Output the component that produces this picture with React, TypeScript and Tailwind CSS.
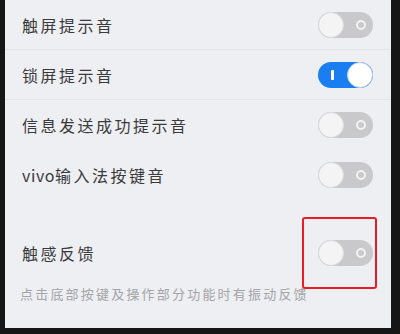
import React from "react";

function Toggle({ on }: { on: boolean }) {
  if (on) {
    return (
      <div className="relative w-[55px] h-[26px] rounded-full bg-[#1a7ef0] flex items-center justify-end shrink-0">
        <div className="absolute left-[13px] top-[8px] w-[2.5px] h-[10px] bg-white rounded-[1px]" />
        <div className="w-[26px] h-[26px] rounded-full bg-white border border-[#c3cfe3]" />
      </div>
    );
  }
  return (
    <div className="relative w-[55px] h-[26px] rounded-full bg-[#c9c9cc] flex items-center shrink-0">
      <div className="w-[26px] h-[26px] rounded-full bg-[#f4f4f5] border border-[#dcdcde]" />
      <div className="absolute right-[7px] top-[8px] w-[10px] h-[10px] rounded-full border-[2px] border-[#f2f2f3]" />
    </div>
  );
}

function Row({ label, on, border = true }: { label: React.ReactNode; on: boolean; border?: boolean }) {
  return (
    <div
      className={`h-[50px] flex items-center justify-between pl-[17px] pr-[18px] ${
        border ? "border-b border-[#e4e5e8]" : ""
      }`}
    >
      <span className="text-[16px] tracking-[2.5px] text-[#3a3a3c] leading-none">{label}</span>
      <Toggle on={on} />
    </div>
  );
}

export default function App() {
  return (
    <div
      className="w-[400px] h-[334px] bg-[#161616] pl-[5px] pr-[9px] pb-[6px] overflow-hidden"
      style={{ fontFamily: '"Noto Sans CJK SC", "Noto Sans", sans-serif' }}
    >
      <div className="relative w-full h-full bg-[#eeeff2] flex flex-col">
        <Row label="触屏提示音" on={false} />
        <Row label="锁屏提示音" on={true} />
        <Row label="信息发送成功提示音" on={false} border={false} />
        <Row
          label={
            <>
              <span className="tracking-[0.6px]">vivo</span>输入法按键音
            </>
          }
          on={false}
          border={false}
        />
        <div className="h-[28px]" />
        <Row label="触感反馈" on={false} border={false} />
        <div className="pl-[15px] mt-[8px] text-[13px] tracking-[2.2px] leading-[15px] text-[#a4a4a8]">
          点击底部按键及操作部分功能时有振动反馈
        </div>
        <div className="absolute left-[297px] top-[217px] w-[75px] h-[72px] border-2 border-[#ec1c24] rounded-[3px]" />
      </div>
    </div>
  );
}
